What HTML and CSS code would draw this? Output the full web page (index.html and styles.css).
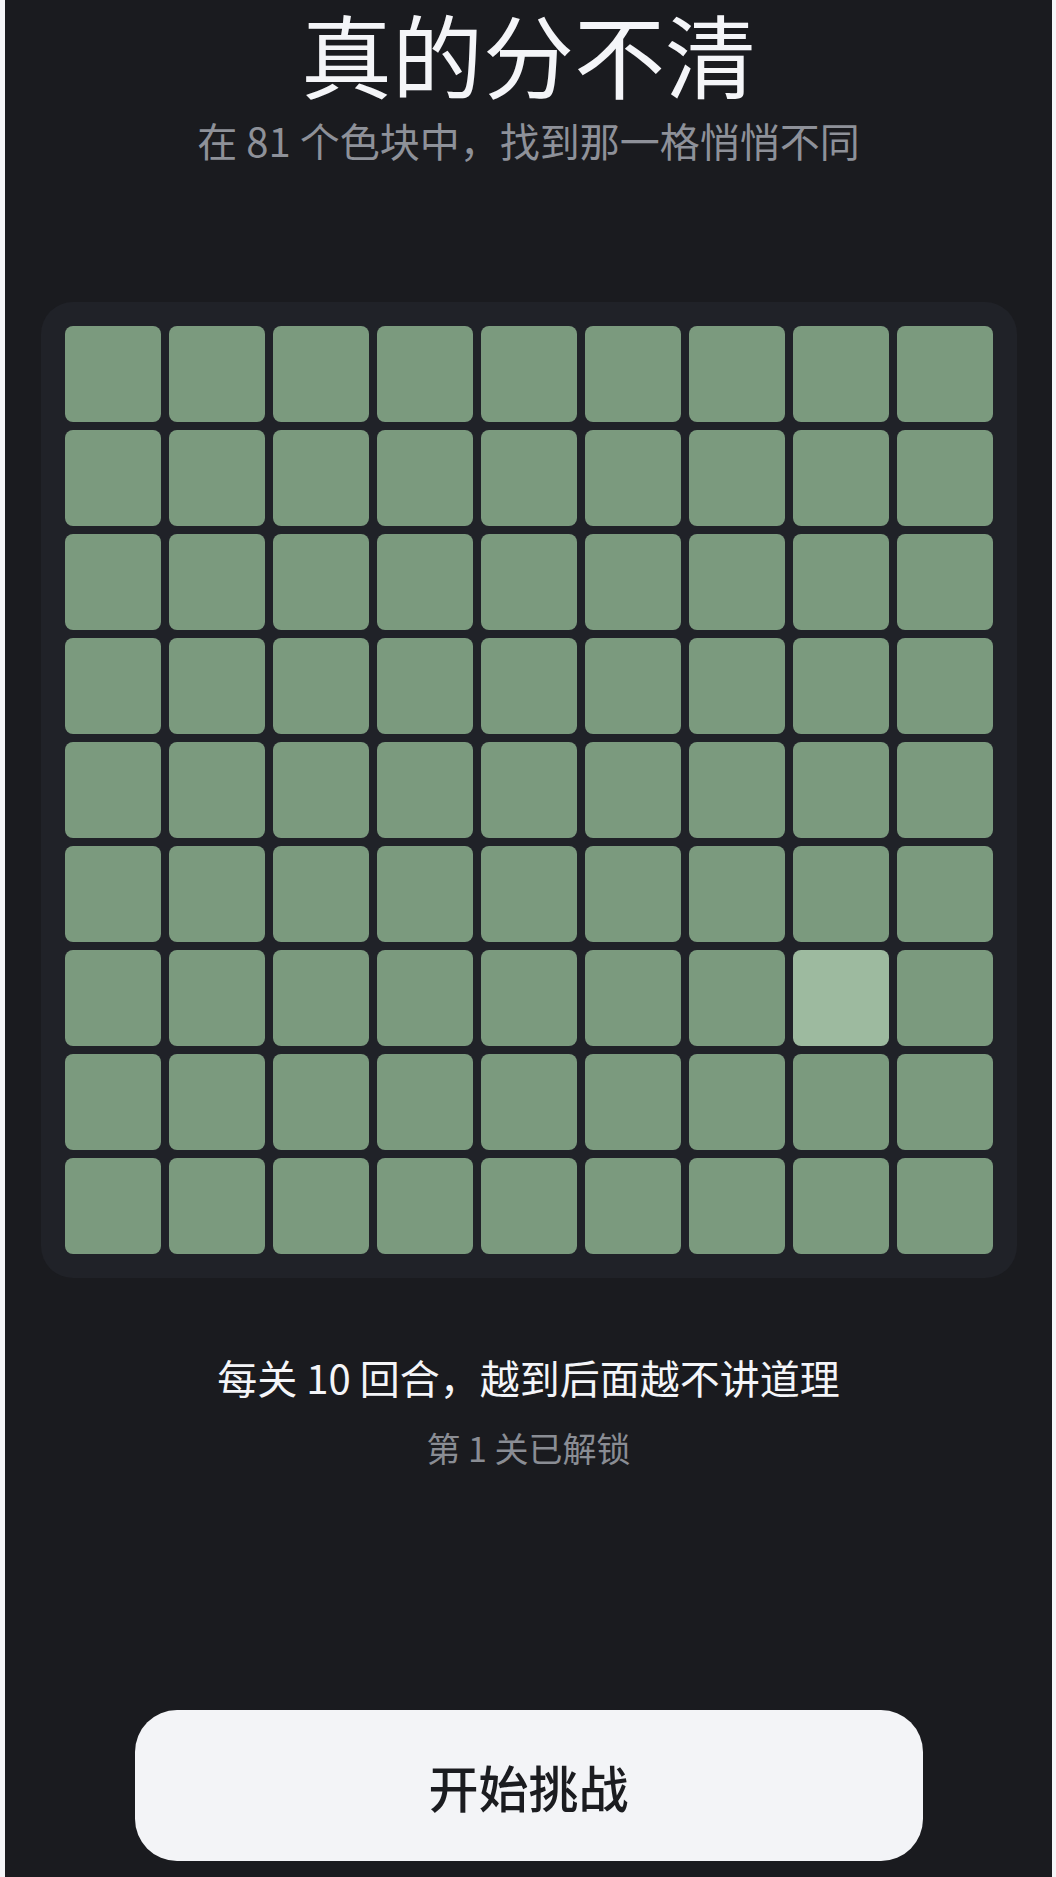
FILE: index.html
```html
<!DOCTYPE html>
<html lang="zh-CN">
<head>
<meta charset="utf-8">
<title>真的分不清</title>
<link rel="stylesheet" href="styles.css">
</head>
<body>
<div class="app">
  <header class="head">
    <h1 class="title">真的分不清</h1>
    <p class="subtitle">在 81 个色块中，找到那一格悄悄不同</p>
  </header>
  <div class="board">
    <div class="tile"></div><div class="tile"></div><div class="tile"></div><div class="tile"></div><div class="tile"></div><div class="tile"></div><div class="tile"></div><div class="tile"></div><div class="tile"></div>
    <div class="tile"></div><div class="tile"></div><div class="tile"></div><div class="tile"></div><div class="tile"></div><div class="tile"></div><div class="tile"></div><div class="tile"></div><div class="tile"></div>
    <div class="tile"></div><div class="tile"></div><div class="tile"></div><div class="tile"></div><div class="tile"></div><div class="tile"></div><div class="tile"></div><div class="tile"></div><div class="tile"></div>
    <div class="tile"></div><div class="tile"></div><div class="tile"></div><div class="tile"></div><div class="tile"></div><div class="tile"></div><div class="tile"></div><div class="tile"></div><div class="tile"></div>
    <div class="tile"></div><div class="tile"></div><div class="tile"></div><div class="tile"></div><div class="tile"></div><div class="tile"></div><div class="tile"></div><div class="tile"></div><div class="tile"></div>
    <div class="tile"></div><div class="tile"></div><div class="tile"></div><div class="tile"></div><div class="tile"></div><div class="tile"></div><div class="tile"></div><div class="tile"></div><div class="tile"></div>
    <div class="tile"></div><div class="tile"></div><div class="tile"></div><div class="tile"></div><div class="tile"></div><div class="tile"></div><div class="tile"></div><div class="tile tile-odd"></div><div class="tile"></div>
    <div class="tile"></div><div class="tile"></div><div class="tile"></div><div class="tile"></div><div class="tile"></div><div class="tile"></div><div class="tile"></div><div class="tile"></div><div class="tile"></div>
    <div class="tile"></div><div class="tile"></div><div class="tile"></div><div class="tile"></div><div class="tile"></div><div class="tile"></div><div class="tile"></div><div class="tile"></div><div class="tile"></div>
  </div>
  <div class="info">
    <p class="rule">每关 10 回合，越到后面越不讲道理</p>
    <p class="level">第 1 关已解锁</p>
  </div>
  <div class="actions">
    <button class="start" type="button">开始挑战</button>
  </div>
</div>
</body>
</html>
```

FILE: styles.css
```css
html, body {
  margin: 0;
  padding: 0;
}

body {
  background: #f4f5f8;
  font-family: "Noto Sans CJK SC", "Noto Sans", sans-serif;
}

.app {
  margin: 0 4px 0 5px;
  min-height: 1877px;
  background: #1a1b1f;
  display: flex;
  flex-direction: column;
  align-items: center;
  box-sizing: border-box;
  padding-bottom: 16px;
}

.head {
  display: flex;
  flex-direction: column;
  align-items: center;
  gap: 14px;
}

.title {
  margin: 0;
  padding-top: 2px;
  font-size: 91px;
  line-height: 100px;
  font-weight: 400;
  color: #f4f5f8;
}

.subtitle {
  margin: 0;
  font-size: 40px;
  line-height: 48px;
  color: #8e9199;
}

.board {
  margin-top: 138px;
  width: 976px;
  box-sizing: border-box;
  padding: 24px;
  background: #202228;
  border-radius: 32px;
  display: grid;
  grid-template-columns: repeat(9, 96px);
  grid-auto-rows: 96px;
  gap: 8px;
}

.tile {
  background: #7b9a7e;
  border-radius: 8px;
}

.tile-odd {
  background: #9dba9f;
}

.info {
  margin-top: 75px;
  display: flex;
  flex-direction: column;
  align-items: center;
  gap: 27px;
}

.rule {
  margin: 0;
  font-size: 40px;
  line-height: 48px;
  color: #f4f5f8;
}

.level {
  margin: 0;
  font-size: 34px;
  line-height: 40px;
  color: #8a8d94;
}

.actions {
  margin-top: auto;
}

.start {
  width: 788px;
  height: 151px;
  border: none;
  border-radius: 42px;
  background: #f3f4f7;
  color: #1b1c20;
  font-family: "Noto Sans CJK SC", "Noto Sans", sans-serif;
  font-size: 50px;
  font-weight: 500;
  padding: 0;
  cursor: pointer;
}
```
